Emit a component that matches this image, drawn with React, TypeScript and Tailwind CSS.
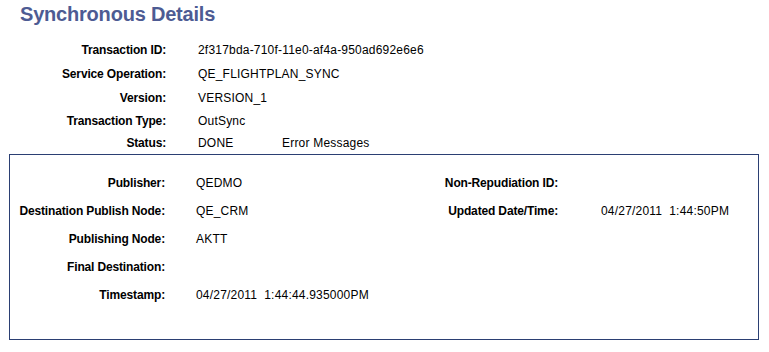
const summary = [
  { label: "Transaction ID:", value: "2f317bda-710f-11e0-af4a-950ad692e6e6", h: "h-6" },
  { label: "Service Operation:", value: "QE_FLIGHTPLAN_SYNC", h: "h-6" },
  { label: "Version:", value: "VERSION_1", h: "h-6" },
  { label: "Transaction Type:", value: "OutSync", h: "h-[22px]" },
];

const detail = [
  { label: "Publisher:", value: "QEDMO", label2: "Non-Repudiation ID:", value2: "" },
  { label: "Destination Publish Node:", value: "QE_CRM", label2: "Updated Date/Time:", value2: "04/27/2011  1:44:50PM" },
  { label: "Publishing Node:", value: "AKTT", label2: "", value2: "" },
  { label: "Final Destination:", value: "", label2: "", value2: "" },
  { label: "Timestamp:", value: "04/27/2011  1:44:44.935000PM", label2: "", value2: "" },
];

export default function App() {
  return (
    <div className="w-[769px] h-[352px] bg-white text-black text-[12px] font-['Liberation_Sans',Arial,sans-serif] overflow-hidden">
      <h1 className="ml-[20px] h-7 leading-7 text-[20px] font-bold tracking-[-0.2px] text-[#4d5b93]">
        Synchronous Details
      </h1>

      <div className="mt-[10px]">
        {summary.map((row) => (
          <div key={row.label} className={`flex items-center ${row.h}`}>
            <span className="w-[166px] text-right font-bold tracking-[-0.15px]">{row.label}</span>
            <span className="ml-[32px] tracking-[0.2px]">{row.value}</span>
          </div>
        ))}
        <div className="flex items-center h-[21px]">
          <span className="w-[166px] text-right font-bold tracking-[-0.15px]">Status:</span>
          <span className="ml-[32px] w-[84px] tracking-[0.2px]">DONE</span>
          <span className="tracking-[0.2px]">Error Messages</span>
        </div>
      </div>

      <section className="ml-[9px] mt-px w-[750px] h-[186px] border border-[#2b3f73] pt-[14px]">
        {detail.map((row) => (
          <div
            key={row.label}
            className="grid grid-cols-[155px_235px_158px_1fr] items-center h-7"
          >
            <span className="text-right font-bold tracking-[-0.15px] whitespace-nowrap">{row.label}</span>
            <span className="pl-[31px] tracking-[0.2px] whitespace-pre">{row.value}</span>
            <span className="text-right font-bold tracking-[-0.15px] whitespace-nowrap">{row.label2}</span>
            <span className="pl-[43px] tracking-[0.2px] whitespace-pre">{row.value2}</span>
          </div>
        ))}
      </section>
    </div>
  );
}
